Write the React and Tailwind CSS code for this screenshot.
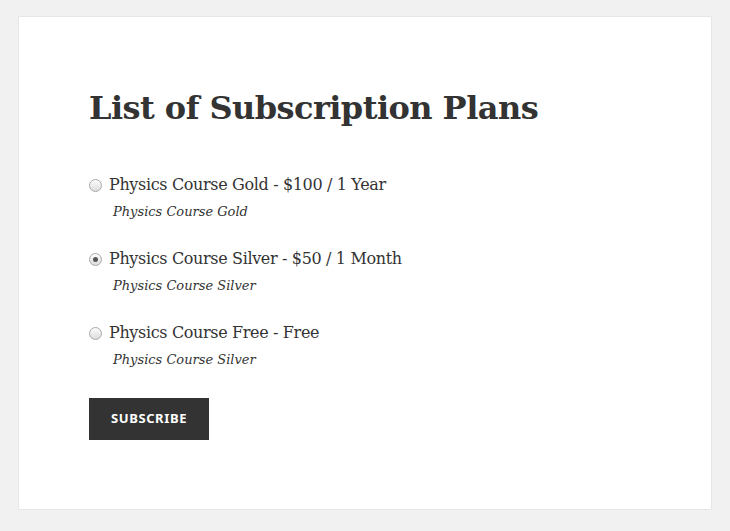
const plans = [
  { label: "Physics Course Gold - $100 / 1 Year", desc: "Physics Course Gold", checked: false },
  { label: "Physics Course Silver - $50 / 1 Month", desc: "Physics Course Silver", checked: true },
  { label: "Physics Course Free - Free", desc: "Physics Course Silver", checked: false },
];

const Radio = ({ checked }) => (
  <span className="w-[13px] h-[13px] rounded-full border border-[#a9a9a9] bg-gradient-to-b from-[#fdfdfd] to-[#dcdcdc] flex items-center justify-center shrink-0">
    {checked && <span className="w-[5px] h-[5px] rounded-full bg-[#555]" />}
  </span>
);

export default function App() {
  return (
    <div className="min-h-[531px] bg-[#f1f1f1] pt-[17px] pb-[22px] pl-[19px] pr-[19px]">
      <div className="bg-white w-[692px] h-[492px] shadow-[0_0_1px_rgba(0,0,0,0.25)] pl-[70px] pt-[69px] text-[#333] font-['DejaVu_Serif',serif]">
        <h1 className="text-[32px] font-bold leading-[44px] tracking-[-0.55px]">List of Subscription Plans</h1>

        <div className="mt-[43px] flex flex-col gap-[24px]">
          {plans.map((p, i) => (
            <div key={i}>
              <label className="flex items-center gap-[7px] h-[24px]">
                <Radio checked={p.checked} />
                <span className="text-[16px] leading-[24px] tracking-[-0.35px]">{p.label}</span>
              </label>
              <div className="pl-[24px] mt-[4px] text-[13px] leading-[22px] italic">{p.desc}</div>
            </div>
          ))}
        </div>

        <button className="mt-[27px] w-[120px] h-[42px] bg-[#333] text-white text-[13px] font-bold uppercase font-['Noto_Sans',sans-serif] tracking-[0.6px]">
          Subscribe
        </button>
      </div>
    </div>
  );
}
